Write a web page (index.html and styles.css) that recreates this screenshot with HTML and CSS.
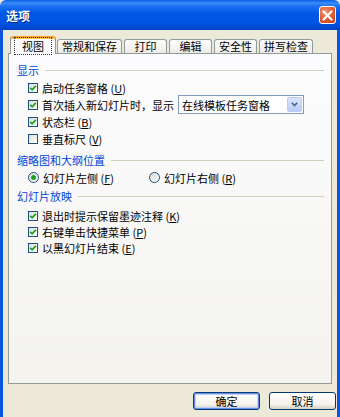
FILE: index.html
```html
<!DOCTYPE html>
<html lang="zh-CN">
<head>
    <meta charset="UTF-8">
    <title>选项</title>
    <link rel="stylesheet" href="styles.css">
</head>
<body>
<div class="window">
    <div class="titlebar">
        <span class="title">选项</span>
        <span class="close">
            <svg width="11" height="11" viewBox="0 0 11 11"><path d="M1.5 1.5 L9.5 9.5 M9.5 1.5 L1.5 9.5" stroke="#fff" stroke-width="2.2" stroke-linecap="round"/></svg>
        </span>
    </div>

    <div class="content">
        <div class="tabs">
            <div class="tab active"><span class="focus">视图</span></div>
            <div class="tab">常规和保存</div>
            <div class="tab">打印</div>
            <div class="tab">编辑</div>
            <div class="tab">安全性</div>
            <div class="tab">拼写检查</div>
        </div>

        <div class="panel">
            <div class="group-title first">显示</div>
            <div class="row"><span class="check on"></span>启动任务窗格 (<u>U</u>)</div>
            <div class="row">
                <span class="check on"></span>首次插入新幻灯片时，显示
                <span class="select">
                    <span class="select-text">在线模板任务窗格</span>
                    <span class="select-btn">
                        <svg width="7" height="5" viewBox="0 0 7 5"><path d="M0.8 0.8 L3.5 3.6 L6.2 0.8" fill="none" stroke="#4d6185" stroke-width="1.6"/></svg>
                    </span>
                </span>
            </div>
            <div class="row"><span class="check on"></span>状态栏 (<u>B</u>)</div>
            <div class="row"><span class="check"></span>垂直标尺 (<u>V</u>)</div>

            <div class="group-title second">缩略图和大纲位置</div>
            <div class="row radios">
                <span class="radio-item"><span class="radio on"></span>幻灯片左侧 (<u>F</u>)</span>
                <span class="radio-item"><span class="radio"></span>幻灯片右侧 (<u>R</u>)</span>
            </div>

            <div class="group-title third">幻灯片放映</div>
            <div class="row short"><span class="check on"></span>退出时提示保留墨迹注释 (<u>K</u>)</div>
            <div class="row short"><span class="check on"></span>右键单击快捷菜单 (<u>P</u>)</div>
            <div class="row short"><span class="check on"></span>以黑幻灯片结束 (<u>E</u>)</div>
        </div>

        <div class="footer">
            <button class="btn default">确定</button>
            <button class="btn">取消</button>
        </div>
    </div>
</div>
</body>
</html>
```

FILE: styles.css
```css
body {
    margin: 0;
    font-family: "Noto Sans CJK SC", "Liberation Sans", sans-serif;
    font-size: 11px;
    color: #000;
    background: #ece9d8;
}
.window {
    width: 340px;
    height: 417px;
    box-sizing: border-box;
    background: #ece9d8;
    overflow: hidden;
}
.titlebar {
    height: 30px;
    display: flex;
    align-items: center;
    justify-content: space-between;
    padding: 0 4px 0 6px;
    background: linear-gradient(to bottom, #0a5ce6 0%, #3b8cf7 10%, #1a6ff0 22%, #0058e8 45%, #0054e3 75%, #0048d2 92%, #003fc0 100%);
    border-radius: 6px 6px 0 0;
}
.title {
    color: #fff;
    font-weight: bold;
    font-size: 12px;
    text-shadow: 1px 1px 0 #0a2a7a;
}
.close {
    width: 17px;
    height: 18px;
    box-sizing: border-box;
    border: 1px solid #fff;
    border-radius: 3px;
    background: radial-gradient(circle at 35% 30%, #f0966e 0%, #e1582f 55%, #c43c1a 100%);
    display: flex;
    align-items: center;
    justify-content: center;
}
.content {
    height: 387px;
    border-left: 3px solid #0a55e0;
    border-right: 3px solid #0a55e0;
    box-sizing: border-box;
    padding-top: 6px;
}
.tabs {
    display: flex;
    align-items: flex-end;
    margin-left: 7px;
    height: 17px;
}
.tab {
    min-width: 43px;
    height: 14px;
    box-sizing: border-box;
    padding: 0 4px;
    margin-right: 2px;
    border: 1px solid #919b9c;
    border-bottom: none;
    border-radius: 3px 3px 0 0;
    background: linear-gradient(to bottom, #fefefe, #ecebe6);
    text-align: center;
    line-height: 13px;
    white-space: nowrap;
}
.tab.active {
    height: 18px;
    margin-right: 1px;
    margin-bottom: -1px;
    position: relative;
    z-index: 1;
    background: #fcfcfe;
    border-top: 2px solid #f3a233;
    box-shadow: inset 0 1px 0 #ffc83c;
    line-height: 14px;
    padding-top: 1px;
}
.focus {
    outline: 1px dotted #333;
    outline-offset: 0;
    padding: 0 7px;
}
.panel {
    margin: 0 5px;
    height: 331px;
    box-sizing: border-box;
    border: 1px solid #919b9c;
    background: linear-gradient(to bottom, #fcfcfe, #f4f3ee);
    padding: 10px 7px 0 8px;
}
.group-title {
    display: flex;
    align-items: center;
    height: 12px;
    color: #0046d5;
    white-space: nowrap;
}
.group-title::after {
    content: "";
    flex: 1;
    height: 1px;
    margin-left: 6px;
    background: #d0d0bf;
}
.group-title.first { margin-bottom: 3px; }
.group-title.second { margin-top: 7px; margin-bottom: 3px; }
.group-title.third { margin-top: 4px; margin-bottom: 6px; }
.row {
    height: 17px;
    display: flex;
    align-items: center;
    padding-left: 11px;
    white-space: nowrap;
}
.row.short { height: 16px; }
.row u { text-decoration: underline; }
.check {
    width: 10px;
    height: 10px;
    box-sizing: border-box;
    border: 1px solid #1c5180;
    background: linear-gradient(135deg, #dcdcd7, #fff);
    margin-right: 4px;
    flex: none;
}
.check.on {
    background: url("data:image/svg+xml;utf8,<svg xmlns='http://www.w3.org/2000/svg' width='8' height='8'><path d='M1.2 3.8 L3.2 5.8 L6.8 1.8' fill='none' stroke='%2321a121' stroke-width='1.8'/></svg>") center no-repeat, linear-gradient(135deg, #dcdcd7, #fff);
}
.select {
    display: flex;
    align-items: center;
    width: 126px;
    height: 19px;
    box-sizing: border-box;
    margin-left: 4px;
    border: 1px solid #7f9db9;
    background: #fff;
    padding: 1px;
}
.select-text {
    flex: 1;
    padding-left: 2px;
}
.select-btn {
    width: 15px;
    height: 15px;
    box-sizing: border-box;
    border: 1px solid #b9caf3;
    border-radius: 2px;
    background: linear-gradient(to bottom, #dbe5fc, #b8ccf7);
    display: flex;
    align-items: center;
    justify-content: center;
}
.radios { gap: 0; }
.radio-item {
    display: flex;
    align-items: center;
    width: 121px;
}
.radio {
    width: 11px;
    height: 11px;
    box-sizing: border-box;
    border: 1px solid #1c5180;
    border-radius: 50%;
    background: linear-gradient(135deg, #dcdcd7, #fff);
    margin-right: 4px;
    flex: none;
    display: flex;
    align-items: center;
    justify-content: center;
}
.radio.on::after {
    content: "";
    width: 5px;
    height: 5px;
    border-radius: 50%;
    background: #21a121;
}
.footer {
    display: flex;
    justify-content: flex-end;
    gap: 9px;
    margin-top: 8px;
    padding-right: 1px;
}
.btn {
    width: 67px;
    height: 18px;
    box-sizing: border-box;
    border: 1px solid #003c74;
    border-radius: 3px;
    background: linear-gradient(to bottom, #fff, #f4f3ee 70%, #d6d0c5);
    font-family: inherit;
    font-size: 11px;
    padding: 0;
    line-height: 14px;
}
.btn.default {
    box-shadow: inset 0 0 0 1px #6a8de8, inset 0 0 0 2px #c0d0f6;
}
```
